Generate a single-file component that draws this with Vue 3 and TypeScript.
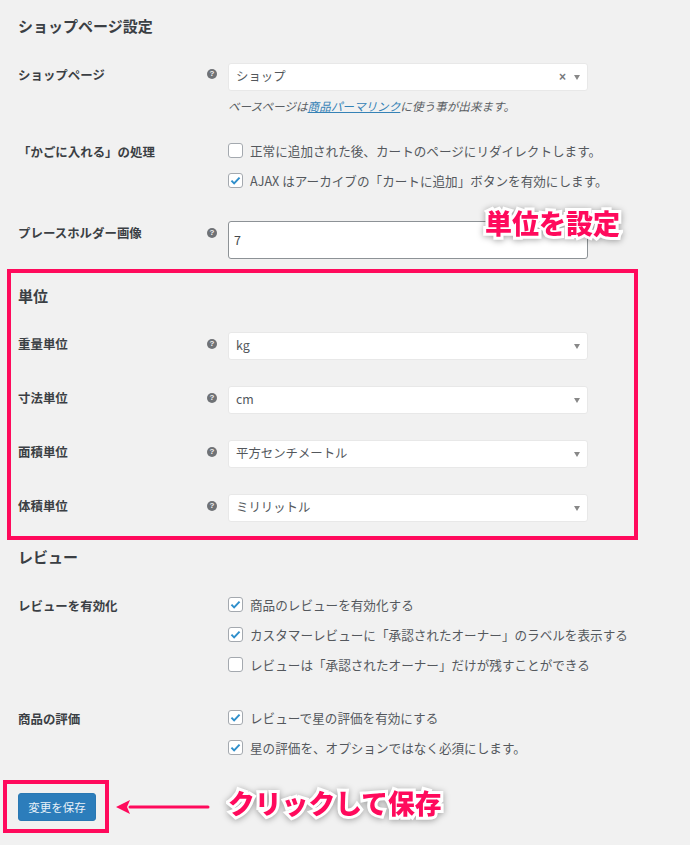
<script setup lang="ts">
interface Check { text: string; checked: boolean }
const units = [
  { label: '重量単位', value: 'kg' },
  { label: '寸法単位', value: 'cm' },
  { label: '面積単位', value: '平方センチメートル' },
  { label: '体積単位', value: 'ミリリットル' },
]
const cartChecks: Check[] = [
  { text: '正常に追加された後、カートのページにリダイレクトします。', checked: false },
  { text: 'AJAX はアーカイブの「カートに追加」ボタンを有効にします。', checked: true },
]
const reviewChecks: Check[] = [
  { text: '商品のレビューを有効化する', checked: true },
  { text: 'カスタマーレビューに「承認されたオーナー」のラベルを表示する', checked: true },
  { text: 'レビューは「承認されたオーナー」だけが残すことができる', checked: false },
]
const ratingChecks: Check[] = [
  { text: 'レビューで星の評価を有効にする', checked: true },
  { text: '星の評価を、オプションではなく必須にします。', checked: true },
]
</script>

<template>
  <div class="page">
    <h2 class="heading first">ショップページ設定</h2>

    <div class="row shop">
      <div class="label">ショップページ</div>
      <div class="help"><span class="q">?</span></div>
      <div class="field">
        <div class="select">
          <span class="value">ショップ</span>
          <span class="clear">×</span>
          <span class="caret"></span>
        </div>
        <p class="desc">ベースページは<a class="link">商品パーマリンク</a>に使う事が出来ます。</p>
      </div>
    </div>

    <div class="row cart">
      <div class="label checks-label">「かごに入れる」の処理</div>
      <div class="help"></div>
      <div class="field">
        <label v-for="c in cartChecks" :key="c.text" class="check">
          <span class="box">
            <svg v-if="c.checked" viewBox="0 0 16 16" class="tick"><path d="M3 8.2l3.3 3.4L13 4.4" /></svg>
          </span>
          {{ c.text }}
        </label>
      </div>
    </div>

    <div class="row placeholder">
      <div class="label">プレースホルダー画像</div>
      <div class="help"><span class="q">?</span></div>
      <div class="field">
        <div class="input">7</div>
      </div>
    </div>

    <section class="unit-section">
      <h2 class="heading">単位</h2>
      <div class="unit-rows">
        <div v-for="u in units" :key="u.label" class="row unit">
          <div class="label">{{ u.label }}</div>
          <div class="help"><span class="q">?</span></div>
          <div class="field">
            <div class="select">
              <span class="value">{{ u.value }}</span>
              <span class="caret"></span>
            </div>
          </div>
        </div>
      </div>
      <div class="redbox unit-box"></div>
    </section>

    <h2 class="heading review">レビュー</h2>

    <div class="row review-row">
      <div class="label checks-label">レビューを有効化</div>
      <div class="help"></div>
      <div class="field">
        <label v-for="c in reviewChecks" :key="c.text" class="check">
          <span class="box">
            <svg v-if="c.checked" viewBox="0 0 16 16" class="tick"><path d="M3 8.2l3.3 3.4L13 4.4" /></svg>
          </span>
          {{ c.text }}
        </label>
      </div>
    </div>

    <div class="row rating-row">
      <div class="label checks-label">商品の評価</div>
      <div class="help"></div>
      <div class="field">
        <label v-for="c in ratingChecks" :key="c.text" class="check">
          <span class="box">
            <svg v-if="c.checked" viewBox="0 0 16 16" class="tick"><path d="M3 8.2l3.3 3.4L13 4.4" /></svg>
          </span>
          {{ c.text }}
        </label>
      </div>
    </div>

    <button class="save" type="button">変更を保存</button>

    <div class="redbox save-box"></div>
    <div class="callout unit-callout">単位を設定</div>
    <svg class="arrow" viewBox="0 0 94 16" width="94" height="16">
      <path d="M14 8H92" stroke="#ff0a5c" stroke-width="3" stroke-linecap="round" fill="none" />
      <path d="M0 8L14 1L11 8L14 15Z" fill="#ff0a5c" />
    </svg>
    <div class="callout save-callout">クリックして保存</div>
  </div>
</template>

<style>
html, body { margin: 0; background: #f1f1f1; }
</style>

<style scoped>
.page {
  position: relative;
  width: 690px;
  height: 845px;
  overflow: hidden;
  box-sizing: border-box;
  padding: 14px 0 0 18px;
  background: #f1f1f1;
  color: #50555a;
  font-family: "Noto Sans CJK JP", "Liberation Sans", sans-serif;
  font-size: 12px;
}
.heading {
  margin: 0;
  height: 24px;
  line-height: 24px;
  font-size: 15px;
  font-weight: 700;
  color: #3b3f44;
}
.heading.first { margin-bottom: 25px; }
.unit-section .heading { margin-bottom: 24px; margin-top: 25px; }
.unit-rows { display: flex; flex-direction: column; gap: 26px; }
.heading.review { margin-top: 23px; margin-bottom: 20px; }
.row {
  display: grid;
  grid-template-columns: 187px 23px 360px;
  align-items: start;
}
.label {
  font-weight: 700;
  font-size: 12.45px;
  line-height: 20px;
  color: #3b3f44;
}
.help {
  display: flex;
  justify-content: center;
  padding-top: 7px;
  padding-right: 9px;
}
.q {
  width: 10px;
  height: 10px;
  border-radius: 50%;
  background: #6f7276;
  color: #f1f1f1;
  font: 700 8px/10px "Liberation Sans", sans-serif;
  text-align: center;
}
.row.shop { margin-bottom: 19px; }
.row.cart { margin-bottom: 26px; }
.row.review-row { margin-bottom: 23px; }
.row.rating-row { margin-bottom: 31px; }
.row.shop .help { padding-top: 6px; }
.row.shop .label { margin-top: 2px; }
.row.unit .label { margin-top: 1.5px; }
.row.placeholder .label { margin-top: 2px; }
.checks-label { margin-top: 7px; }
.select {
  height: 28px;
  box-sizing: border-box;
  border: 1px solid #e8e8e8;
  border-radius: 3px;
  background: #fff;
  padding: 0 7px;
  display: flex;
  align-items: center;
  font-size: 12.4px;
  color: #53575c;
}
.value { flex: 1; padding-bottom: 2px; }
.clear {
  color: #77797c;
  font: 700 12px/12px "Liberation Sans", sans-serif;
  margin-right: 8px;
}
.caret {
  width: 0;
  height: 0;
  border-left: 3.5px solid transparent;
  border-right: 3.5px solid transparent;
  border-top: 5px solid #888;
}
.desc {
  margin: 5px 0 0;
  height: 20px;
  line-height: 20px;
  font-style: italic;
  font-size: 11.6px;
  color: #5a5e63;
}
.link { color: #3582b6; text-decoration: underline; }
.check {
  display: flex;
  align-items: center;
  height: 30px;
  color: #54585d;
  font-size: 12.6px;
  white-space: nowrap;
}
.box {
  width: 15px;
  height: 15px;
  box-sizing: border-box;
  margin-right: 7px;
  border: 1px solid #a4a9af;
  border-radius: 3px;
  background: #fff;
  flex: none;
  display: flex;
}
.tick { width: 13px; height: 13px; }
.tick path { fill: none; stroke: #2f8fcb; stroke-width: 2.4; }
.input {
  height: 38px;
  box-sizing: border-box;
  border: 1px solid #8d9296;
  border-radius: 3px;
  background: #fff;
  padding: 0 5px;
  line-height: 36px;
  font-size: 12.5px;
  color: #44484c;
}
.save {
  display: block;
  width: 78px;
  height: 28px;
  padding: 0;
  border: 1px solid #2a78b3;
  border-radius: 3px;
  background: #2c7dbb;
  color: #e8f1f8;
  font-family: inherit;
  font-size: 11.5px;
}
.redbox {
  position: absolute;
  box-sizing: border-box;
  border: 4px solid #ff0a5c;
  pointer-events: none;
}
.unit-box { left: 7px; top: 269px; width: 631px; height: 271px; }
.save-box { left: 3px; top: 780px; width: 106px; height: 53px; }
.callout {
  position: absolute;
  font-size: 27px;
  font-weight: 900;
  line-height: 34px;
  color: #ff0a5c;
  white-space: nowrap;
  -webkit-text-stroke: 6px #fff;
  paint-order: stroke fill;
  filter: drop-shadow(0 1px 3px rgba(0, 0, 0, 0.35));
}
.unit-callout { left: 485px; top: 206px; }
.save-callout { left: 228px; top: 786px; font-size: 26.8px; }
.arrow { position: absolute; left: 116px; top: 799px; }
</style>
